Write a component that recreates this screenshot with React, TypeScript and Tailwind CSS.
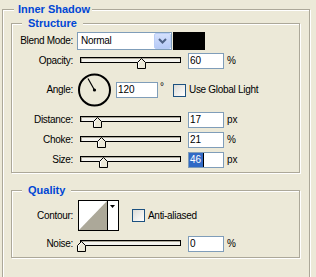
import React from "react";

const etched =
  "border border-[#aca899] shadow-[inset_1px_1px_0_#fff,1px_1px_0_#fff]";
const legendCls =
  "bg-[#ECE9D8] text-[11px] leading-[12px] h-[12px] font-bold text-[#0046D5]";
const labelCls =
  "w-[61px] shrink-0 text-right text-[10px] leading-[12px] tracking-[-0.3px] text-black";

function Thumb({ left }: { left: string }) {
  return (
    <svg
      className={`absolute top-[5px] ${left}`}
      width="9"
      height="11"
      viewBox="0 0 9 11"
    >
      <polygon
        points="0.5,4.5 4.5,0.5 8.5,4.5 8.5,10.5 0.5,10.5"
        fill="#ECE9D8"
        stroke="#000"
        strokeWidth="1"
      />
      <polyline points="1.5,9.5 1.5,4.9 4.5,1.9" fill="none" stroke="#fff" strokeWidth="1" />
    </svg>
  );
}

function Slider({ thumb }: { thumb: string }) {
  return (
    <div className="relative ml-[7px] w-[101px] h-[16px] shrink-0">
      <div className="mt-[4px] h-[6px] border border-black bg-[#f4f3ee] shadow-[inset_1px_1px_0_#aca899]" />
      <Thumb left={thumb} />
    </div>
  );
}

function NumBox({
  children,
  cls,
}: {
  children: React.ReactNode;
  cls: string;
}) {
  return (
    <div
      className={`${cls} h-[16px] shrink-0 border border-[#7f9db9] bg-white pl-[1px] flex items-center text-[10px] leading-[12px] text-black`}
    >
      {children}
    </div>
  );
}

function Unit({ children }: { children: React.ReactNode }) {
  return (
    <span className="ml-[3px] text-[10px] leading-[12px] text-black">
      {children}
    </span>
  );
}

function CheckBox() {
  return (
    <div className="w-[13px] h-[13px] shrink-0 border border-[#1c5180] bg-gradient-to-br from-[#dcdcd7] to-white" />
  );
}

function SliderRow({
  label,
  thumb,
  value,
  unit,
  mt,
  selected,
}: {
  label: string;
  thumb: string;
  value: string;
  unit: string;
  mt: string;
  selected?: boolean;
}) {
  return (
    <div className={`flex items-center h-[16px] ${mt}`}>
      <div className={labelCls}>{label}</div>
      <Slider thumb={thumb} />
      <NumBox cls="ml-[7px] w-[36px]">
        {selected ? (
          <span className="-ml-[1px] pl-[1px] pr-[2px] h-full flex items-center bg-[#316ac5] text-white border-r border-black">
            {value}
          </span>
        ) : (
          value
        )}
      </NumBox>
      <Unit>{unit}</Unit>
    </div>
  );
}

export default function App() {
  return (
    <div className="w-[316px] h-[277px] overflow-hidden bg-[#ECE9D8] pt-[3px] pl-[2px] font-['Liberation_Sans',Arial,sans-serif]">
      <fieldset className={`w-[308px] pt-[2px] pb-[40px] ${etched}`}>
        <legend className={`${legendCls} ml-[11px] pl-[4px] pr-[2px]`}>
          Inner Shadow
        </legend>

        {/* Structure */}
        <fieldset className={`ml-[8px] w-[289px] pb-[4px] ${etched}`}>
          <legend className={`${legendCls} ml-[10px] px-[6px]`}>
            Structure
          </legend>

          <div className="flex items-center h-[18px] mt-[3px]">
            <div className={labelCls}>Blend Mode:</div>
            <div className="ml-[4px] w-[95px] h-[18px] shrink-0 border border-[#7f9db9] bg-white flex items-center">
              <span className="pl-[3px] flex-1 text-[10px] leading-[12px] tracking-[-0.3px] text-black">
                Normal
              </span>
              <div className="w-[17px] h-[16px] rounded-[2px] border border-[#b9cdf6] bg-gradient-to-b from-[#d4e0fc] to-[#b6caf7] flex items-center justify-center">
                <svg width="9" height="6" viewBox="0 0 9 6">
                  <path
                    d="M1 1 L4.5 4.5 L8 1"
                    fill="none"
                    stroke="#4d6185"
                    strokeWidth="2"
                  />
                </svg>
              </div>
            </div>
            <div className="ml-[1px] w-[32px] h-[18px] shrink-0 bg-black" />
          </div>

          <SliderRow
            label="Opacity:"
            thumb="left-[57px]"
            value="60"
            unit="%"
            mt="mt-[3px]"
          />

          <div className="flex items-center h-[34px] mt-[4px]">
            <div className={labelCls}>Angle:</div>
            <svg
              className="ml-[5px] shrink-0"
              width="33"
              height="34"
              viewBox="0 0 33 34"
            >
              <circle
                cx="16.5"
                cy="17"
                r="15.5"
                fill="none"
                stroke="#000"
                strokeWidth="2"
              />
              <line
                x1="16.5"
                y1="17"
                x2="10"
                y2="5.5"
                stroke="#000"
                strokeWidth="1.2"
              />
              <circle cx="16.5" cy="17" r="1.6" fill="#000" />
            </svg>
            <NumBox cls="ml-[5px] w-[42px]">120</NumBox>
            <div className="self-start mt-[8px] w-[15px] pl-[2px] text-[10px] leading-[12px] text-black">
              °
            </div>
            <CheckBox />
            <span className="ml-[3px] text-[10px] leading-[12px] tracking-[-0.3px] text-black">
              Use Global Light
            </span>
          </div>

          <SliderRow
            label="Distance:"
            thumb="left-[13px]"
            value="17"
            unit="px"
            mt="mt-[5px]"
          />
          <SliderRow
            label="Choke:"
            thumb="left-[17px]"
            value="21"
            unit="%"
            mt="mt-[4px]"
          />
          <SliderRow
            label="Size:"
            thumb="left-[19px]"
            value="46"
            unit="px"
            mt="mt-[4px]"
            selected
          />
        </fieldset>

        {/* Quality */}
        <fieldset className={`ml-[8px] mt-[11px] w-[289px] pb-[5px] ${etched}`}>
          <legend className={`${legendCls} ml-[10px] px-[6px]`}>Quality</legend>

          <div className="flex items-center h-[31px] mt-[4px]">
            <div className={labelCls}>Contour:</div>
            <div className="ml-[5px] w-[41px] h-[31px] shrink-0 border border-black bg-white flex">
              <svg width="28" height="29" viewBox="0 0 28 29" className="shrink-0">
                <polygon points="0,29 28,0 28,29" fill="#aca899" />
              </svg>
              <div className="w-[1px] h-full bg-black" />
              <svg width="10" height="29" viewBox="0 0 10 29" className="shrink-0">
                <polygon points="2,4 7,4 4.5,7" fill="#000" />
              </svg>
            </div>
            <div className="ml-[13px]">
              <CheckBox />
            </div>
            <span className="ml-[3px] text-[10px] leading-[12px] tracking-[-0.3px] text-black">
              Anti-aliased
            </span>
          </div>

          <SliderRow
            label="Noise:"
            thumb="-left-[3px]"
            value="0"
            unit="%"
            mt="mt-[5px]"
          />
        </fieldset>
      </fieldset>
    </div>
  );
}
